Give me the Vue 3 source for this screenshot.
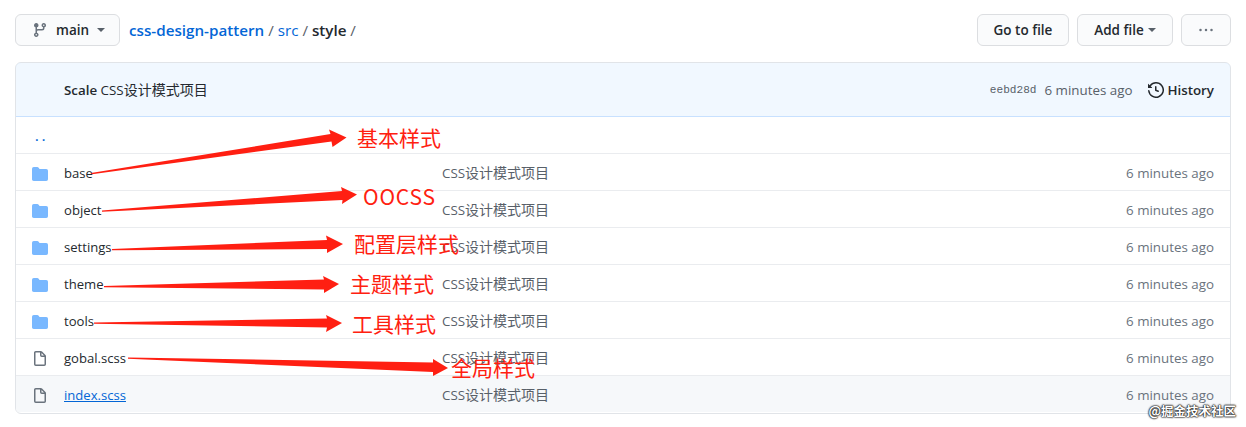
<script setup>
const branch = 'M11.75 2.5a.75.75 0 100 1.5.75.75 0 000-1.5zm-2.25.75a2.25 2.25 0 113 2.122V6A2.5 2.5 0 0110 8.5H6a1 1 0 00-1 1v1.128a2.251 2.251 0 11-1.5 0V5.372a2.25 2.25 0 111.5 0v1.836A2.492 2.492 0 016 7h4a1 1 0 001-1v-.628A2.25 2.25 0 019.5 3.25zM4.25 12a.75.75 0 100 1.5.75.75 0 000-1.5zM3.5 3.25a.75.75 0 111.5 0 .75.75 0 01-1.5 0z'
const folder = 'M1.75 1A1.75 1.75 0 000 2.75v10.5C0 14.216.784 15 1.75 15h12.5A1.75 1.75 0 0016 13.25v-8.5A1.75 1.75 0 0014.25 3h-6.5a.25.25 0 01-.2-.1l-.9-1.2c-.33-.44-.85-.7-1.4-.7h-3.5z'
const file = 'M3.75 1.5a.25.25 0 00-.25.25v11.5c0 .138.112.25.25.25h8.5a.25.25 0 00.25-.25V6H9.75A1.75 1.75 0 018 4.25V1.5H3.75zm5.75.56v2.19c0 .138.112.25.25.25h2.19L9.5 2.06zM2 1.75C2 .784 2.784 0 3.75 0h5.086c.464 0 .909.184 1.237.513l3.414 3.414c.329.328.513.773.513 1.237v8.086A1.75 1.75 0 0112.25 15h-8.5A1.75 1.75 0 012 13.25V1.75z'
const history = 'M1.643 3.143L.427 1.927A.25.25 0 000 2.104V5.75c0 .138.112.25.25.25h3.646a.25.25 0 00.177-.427L2.715 4.215a6.5 6.5 0 11-1.18 4.458.75.75 0 10-1.493.154 8.001 8.001 0 101.6-5.684zM7.75 4a.75.75 0 01.75.75v2.992l2.028.812a.75.75 0 01-.557 1.392l-2.5-1A.75.75 0 017 8.25v-3.5A.75.75 0 017.75 4z'

const rows = [
  { name: 'base', dir: true },
  { name: 'object', dir: true },
  { name: 'settings', dir: true },
  { name: 'theme', dir: true },
  { name: 'tools', dir: true },
  { name: 'gobal.scss', dir: false },
  { name: 'index.scss', dir: false, active: true },
]

const arrows = [
  '91,173 92,174.2 331.5,141.5 332.5,147 346.5,137.5 329,129.5 330.5,134',
  '102,210.5 102,211.8 342.5,200 342,204 357,194.5 341,187 342,191',
  '112,249 112,250.2 327,249 327,253 343,244 326,235.5 327,240',
  '104,286 104,287.2 324,289.5 324,293 339,284 323,276 324,279.5',
  '94,322.5 94,323.8 327,327.5 326,332 342,323 326,315 327,318.5',
  '128,357.5 128,358.7 433,372 433,376 448,368 433,359 433,362.5',
]

const labels = [
  { text: '基本样式', x: 357, y: 146 },
  { text: 'OOCSS', x: 363, y: 205, latin: true },
  { text: '配置层样式', x: 354, y: 252 },
  { text: '主题样式', x: 350, y: 292 },
  { text: '工具样式', x: 352, y: 332 },
  { text: '全局样式', x: 451, y: 376 },
]
</script>

<template>
  <div class="page">
    <div class="topbar">
      <button class="btn branch">
        <svg class="ic-branch" width="16" height="16" viewBox="0 0 16 16"><path :d="branch" /></svg>
        <span>main</span>
        <i class="caret"></i>
      </button>
      <div class="crumbs">
        <a class="repo">css-design-pattern</a><span class="sep"> / </span><a class="link">src</a><span class="sep"> / </span><strong class="cur">style</strong><span class="sep"> /</span>
      </div>
      <div class="actions">
        <button class="btn goto">Go to file</button>
        <button class="btn add">Add file <i class="caret dark"></i></button>
        <button class="btn more" aria-label="More">
          <svg width="16" height="16" viewBox="0 0 16 16"><circle cx="2.5" cy="8" r="1.25" /><circle cx="8" cy="8" r="1.25" /><circle cx="13.5" cy="8" r="1.25" /></svg>
        </button>
      </div>
    </div>

    <div class="box">
      <div class="box-head">
        <div class="commit"><b>Scale</b> CSS<span class="cjk">设计模式项目</span></div>
        <div class="meta">
          <span class="sha">eebd28d</span>
          <span class="ago">6 minutes ago</span>
          <span class="hist">
            <svg width="16" height="16" viewBox="0 0 16 16"><path :d="history" /></svg>
            History
          </span>
        </div>
      </div>
      <div class="row up"><a class="dots">..</a></div>
      <div v-for="r in rows" :key="r.name" class="row" :class="{ active: r.active }">
        <svg class="icon" :class="r.dir ? 'dir' : 'doc'" width="16" height="16" viewBox="0 0 16 16"><path :d="r.dir ? folder : file" /></svg>
        <span class="name">{{ r.name }}</span>
        <span class="msg">CSS<span class="cjk">设计模式项目</span></span>
        <span class="time">6 minutes ago</span>
      </div>
    </div>

    <svg class="notes" width="1246" height="427" viewBox="0 0 1246 427">
      <polygon v-for="a in arrows" :key="a" :points="a" class="arrow" />
      <text v-for="l in labels" :key="l.text" :x="l.x" :y="l.y" class="label" :class="{ latin: l.latin }">{{ l.text }}</text>
    </svg>
    <div class="mark">@掘金技术社区</div>
  </div>
</template>

<style>
html, body { margin: 0; background: #fff; }
</style>

<style scoped>
.page {
  position: relative;
  width: 1246px;
  height: 427px;
  overflow: hidden;
  box-sizing: border-box;
  padding: 14px 15px 0;
  font-family: "Open Sans", "Noto Sans CJK SC", sans-serif;
  font-size: 13.35px;
  color: #24292e;
}
.cjk { font-size: 14px; line-height: 18px; }
.topbar { display: flex; align-items: center; height: 32px; margin-bottom: 16px; }
.btn {
  box-sizing: border-box;
  height: 32px;
  display: inline-flex;
  align-items: center;
  justify-content: center;
  padding: 0;
  border: 1px solid #dcdee1;
  border-radius: 6px;
  background: #fafbfc;
  color: #24292e;
  font: 600 13.5px "Open Sans", sans-serif;
}
.branch { width: 105px; gap: 8px; margin-right: 9px; padding-left: 16px; justify-content: flex-start; }
.ic-branch { fill: #6a737d; }
.caret { width: 0; height: 0; border: 4px solid transparent; border-top-color: #586069; border-bottom: 0; }
.caret.dark { margin-left: 4px; }
.crumbs { font-size: 15.2px; white-space: pre; }
.repo { color: #0366d6; font-weight: 600; }
.link { color: #0366d6; }
.sep { color: #586069; }
.cur { font-weight: 600; color: #24292e; }
.actions { margin-left: auto; display: flex; gap: 8px; }
.goto { width: 92px; }
.add { width: 96px; }
.more { width: 50px; }
.more svg { fill: #6a737d; }
.box {
  box-sizing: border-box;
  height: 352px;
  border: 1px solid #e1e4e8;
  border-radius: 6px;
  overflow: hidden;
}
.box-head {
  box-sizing: border-box;
  height: 55px;
  margin: -1px -1px 0;
  padding: 0 16px 0 48px;
  display: flex;
  align-items: center;
  justify-content: space-between;
  background: #f1f8ff;
  border: 1px solid #c8e1ff;
  border-radius: 6px 6px 0 0;
}
.commit { color: #24292e; }
.commit b { font-weight: 600; }
.meta { display: flex; align-items: center; color: #586069; }
.sha { font: 11.1px "Liberation Mono", monospace; margin-right: 8px; }
.ago { margin-right: 16px; }
.hist { display: inline-flex; align-items: center; gap: 3px; font-weight: 600; color: #24292e; }
.hist svg { fill: #24292e; }
.row {
  box-sizing: border-box;
  height: 37px;
  border-top: 1px solid #eaecef;
  display: flex;
  align-items: center;
  position: relative;
  padding: 2px 16px 0;
  line-height: 18px;
}
.row.up { border-top: 0; height: 36px; }
.dots { margin-left: 3px; color: #0366d6; font-weight: 600; letter-spacing: 3px; }
.row.active { background: #f6f8fa; }
.icon { flex: none; margin: 2px 16px 0 0; }
.dir { fill: #79b8ff; }
.doc { fill: #6a737d; }
.name { width: 378px; flex: none; font-size: 13.1px; }
.active .name { color: #0366d6; text-decoration: underline; }
.msg { color: #586069; }
.time { margin-left: auto; color: #6a737d; }
.notes { position: absolute; left: 0; top: 0; pointer-events: none; }
.arrow { fill: #ff1f12; }
.label { font: 400 21px "Noto Sans CJK SC", sans-serif; fill: #ff2010; }
.label.latin { letter-spacing: 0.8px; }
.mark {
  position: absolute;
  right: 10px;
  bottom: 7px;
  font: 600 12.5px "Noto Sans CJK SC", sans-serif;
  color: #fff;
  text-shadow: 0 0 1px #222, 0 0 1px #222, 0 0 2px #222, 0 0 2px #222;
}
</style>
